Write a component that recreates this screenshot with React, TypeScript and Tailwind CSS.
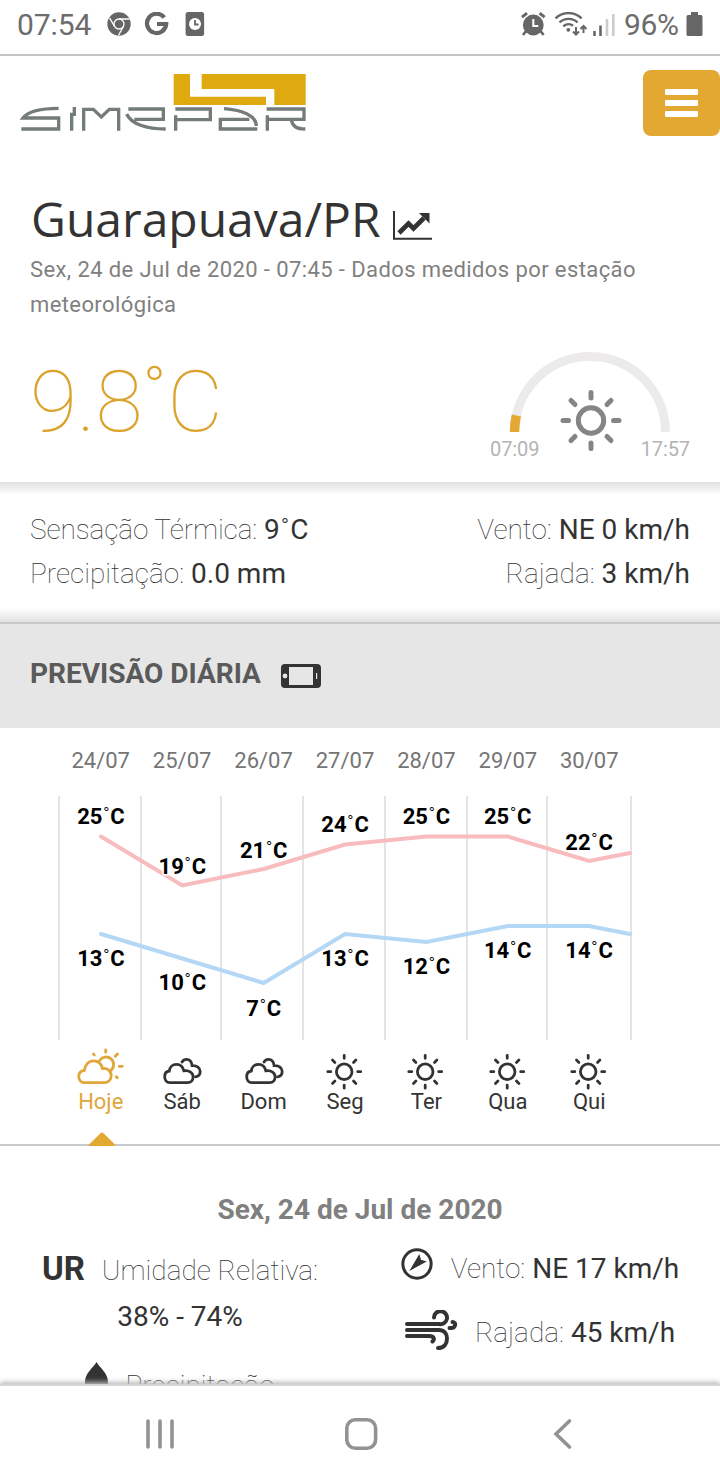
import type { ReactNode } from "react";

type Sky = "partly" | "cloudy" | "sunny";

type Day = {
  date: string;
  name: string;
  sky: Sky;
  max: number;
  min: number;
  maxY: number;
  minY: number;
  maxLabelY: number;
  minLabelY: number;
};

const days: Day[] = [
  { date: "24/07", name: "Hoje", sky: "partly", max: 25, min: 13, maxY: 40.5, minY: 138, maxLabelY: 28, minLabelY: 170 },
  { date: "25/07", name: "Sáb", sky: "cloudy", max: 19, min: 10, maxY: 89.5, minY: 162.5, maxLabelY: 78, minLabelY: 194 },
  { date: "26/07", name: "Dom", sky: "cloudy", max: 21, min: 7, maxY: 73, minY: 187, maxLabelY: 62, minLabelY: 220 },
  { date: "27/07", name: "Seg", sky: "sunny", max: 24, min: 13, maxY: 48.5, minY: 138, maxLabelY: 36, minLabelY: 170 },
  { date: "28/07", name: "Ter", sky: "sunny", max: 25, min: 12, maxY: 40.5, minY: 146, maxLabelY: 28, minLabelY: 178 },
  { date: "29/07", name: "Qua", sky: "sunny", max: 25, min: 14, maxY: 40.5, minY: 130, maxLabelY: 28, minLabelY: 162 },
  { date: "30/07", name: "Qui", sky: "sunny", max: 22, min: 14, maxY: 65, minY: 130, maxLabelY: 54, minLabelY: 162 },
];

const gridLines = [59, 141, 221, 303, 385, 467, 547, 631];
const dayX = (i: number) => 101 + i * 81.35;

function StatusBar() {
  return (
    <div className="flex h-14 items-start border-b-2 border-[#c4c4c4] text-[#6c6c6c]">
      <span className="ml-[17px] mt-[7px] w-[90px] text-[30px] leading-9 tracking-[-0.1px]">07:54</span>
      <svg className="mt-3 h-6 w-[100px]" viewBox="0 0 100 24" fill="none">
        <circle cx="12" cy="12" r="11.7" fill="#666" />
        <circle cx="12" cy="12" r="5" stroke="#fff" strokeWidth="1.3" />
        <path d="M12 7h10.5M7.7 14.6L2.5 5.8M16.3 14.6L11.4 23.5" stroke="#fff" strokeWidth="1.3" />
        <path d="M57.3 5.6A9.6 9.6 0 1 0 59.2 12H50" stroke="#666" strokeWidth="4.2" />
        <rect x="78.6" y="0" width="18.5" height="24" rx="2.5" fill="#666" />
        <circle cx="88" cy="12" r="6" fill="#fff" />
        <path d="M88 8v4.5h3.6" stroke="#666" strokeWidth="1.8" />
      </svg>
      <svg className="ml-auto mt-3 h-6 w-24" viewBox="0 0 96 24" fill="none">
        <circle cx="13.3" cy="13" r="10.4" fill="#666" />
        <path d="M2 5.2L7 1.2M24.6 5.2L19.6 1.2" stroke="#666" strokeWidth="3" />
        <path d="M6 19L3 23M20.6 19L23.6 23" stroke="#666" strokeWidth="2.6" />
        <path d="M13.3 7v7h5" stroke="#fff" strokeWidth="2" />
        <path
          d="M35.6 6.4A18.5 18.5 0 0 1 61.5 6.4M39.5 10.5A13 13 0 0 1 57.6 10.5M43.3 14.3A7.6 7.6 0 0 1 53 13.8"
          stroke="#666"
          strokeWidth="2.4"
        />
        <circle cx="48.3" cy="17.8" r="1.9" fill="#666" />
        <path d="M56 15v7M53 19.5l3 3 3-3M63.5 21v-7M60.5 17l3-3 3 3" stroke="#666" strokeWidth="2" />
        <path d="M74.5 19v5M80.5 13.5v10.5" stroke="#666" strokeWidth="2.6" />
        <path d="M87 7v17M93.3 2v22" stroke="#ccc" strokeWidth="2.6" />
      </svg>
      <span className="ml-[8px] mt-[7px] w-[57px] text-[30px] leading-9 tracking-[-0.4px]">96%</span>
      <svg className="ml-[5px] mr-[17px] mt-3 h-6 w-[17px]" viewBox="0 0 17 24" fill="#666">
        <path d="M5 0h7v3h3a1.5 1.5 0 0 1 1.5 1.5V22.5A1.5 1.5 0 0 1 15 24H2A1.5 1.5 0 0 1 .5 22.5V4.5A1.5 1.5 0 0 1 2 3H5z" />
      </svg>
    </div>
  );
}

function Logo() {
  return (
    <svg className="ml-[19px] h-16 w-[290px]" viewBox="57 210 870 192" fill="none">
      <path d="M521 222H570V290H798V315H521zM605 222H917V315H823V267H605z" fill="#dfa910" />
      <g stroke="#747b7b" strokeWidth="10">
        <path d="M176 325C132 325 86 332 69 354H176V387H64" />
        <path d="M215 392V338M223 348V321" />
        <path d="M251 392V328H280L304 351L328 328H356V392" />
        <path d="M385 327H490V358H403M380 342C393 372 440 387 497 387" />
        <path d="M526 327H631V359H527V392M527 359V346" />
        <path d="M672 326C728 330 769 348 769 378M748 358H661V387H772" />
        <path d="M800 327H912V358H802V392M802 358V346M874 360C878 380 890 387 916 387" />
      </g>
    </svg>
  );
}

function Header() {
  return (
    <header className="flex items-start justify-between pt-[14px]">
      <Logo />
      <button className="flex h-[66px] w-[77px] flex-col items-center justify-center gap-[5px] rounded-lg bg-[#e3a832]">
        <span className="h-[6px] w-[33px] rounded-[1px] bg-white" />
        <span className="h-[6px] w-[33px] rounded-[1px] bg-white" />
        <span className="h-[6px] w-[33px] rounded-[1px] bg-white" />
      </button>
    </header>
  );
}

function SunGauge() {
  return (
    <div className="w-[200px]">
      <svg className="h-[86px] w-full overflow-visible" viewBox="0 0 200 86" fill="none">
        <path d="M24.5 80A75.5 75.5 0 0 1 175.5 80" stroke="#edeaeb" strokeWidth="9" />
        <path d="M24.5 80A75.5 75.5 0 0 1 26.4 63.5" stroke="#e3a832" strokeWidth="9.5" />
        <g stroke="#858585" strokeWidth="5" strokeLinecap="round">
          <circle cx="101" cy="68.5" r="12.7" />
          <path d="M101 40.5v5.5M101 91v5.5M73 68.5h5.5M123.5 68.5h5.5M81 48.5l4 4M117 84.5l4 4M81 88.5l4-4M117 52.5l4-4" />
        </g>
      </svg>
      <div className="mt-[-1px] flex justify-between text-[20px] leading-6 tracking-[-0.1px] text-[#b4b4b4]">
        <span>07:09</span>
        <span>17:57</span>
      </div>
    </div>
  );
}

function Current() {
  return (
    <section className="h-[346px] px-[30px] pt-[50px]">
      <div className="flex h-16 items-center">
        <h1 className="pl-[1px] pt-[1px] font-['Open_Sans'] text-[48px] leading-[64px] text-[#333]">Guarapuava/PR</h1>
        <svg className="ml-[12px] mt-[13px] h-[30px] w-[39px]" viewBox="0 0 39 30" fill="none">
          <path d="M1 1V28.7H39" stroke="#333" strokeWidth="2" />
          <path d="M6 23L15.5 13.5L20.5 18.5L31 8" stroke="#333" strokeWidth="4.6" />
          <path d="M26 3H36.5V13.5z" fill="#333" />
        </svg>
      </div>
      <p className="mr-[-5px] mt-[2px] text-[22px] leading-[35px] tracking-[0.4px] text-[#808080]">
        Sex, 24 de Jul de 2020 - 07:45 - Dados medidos por estação meteorológica
      </p>
      <div className="mt-[30px] flex justify-between">
        <div className="text-[86px] font-thin leading-[100px] text-[#dba22c]">9.8˚C</div>
        <SunGauge />
      </div>
    </section>
  );
}

function Reading({ label, children }: { label: string; children: ReactNode }) {
  return (
    <p className="whitespace-nowrap text-[28px] leading-[44px] text-[#333]">
      <span className="font-thin">{label}</span> {children}
    </p>
  );
}

function Conditions() {
  return (
    <section className="flex h-[140px] justify-between bg-[linear-gradient(#e0e0e0,#fff_13px,#fff_126px,#e2e2e2)] px-[30px] pt-[26px]">
      <div>
        <div className="tracking-[-0.1px]">
          <Reading label="Sensação Térmica:">
            9<span className="mx-[1px] font-light">˚</span>C
          </Reading>
        </div>
        <Reading label="Precipitação:">0.0 mm</Reading>
      </div>
      <div className="text-right">
        <Reading label="Vento:">NE 0 km/h</Reading>
        <Reading label="Rajada:">3 km/h</Reading>
      </div>
    </section>
  );
}

function DailyTitle() {
  return (
    <div className="flex h-[106px] items-center border-t-2 border-[#c9c9c9] bg-[#e6e6e6] pl-[30px]">
      <h2 className="mb-[5px] w-[251px] text-[28px] font-bold leading-8 text-[#5a5a5a]">PREVISÃO DIÁRIA</h2>
      <svg className="h-6 w-10" viewBox="0 0 40 24">
        <rect width="40" height="24" rx="4" fill="#333" />
        <rect x="8" y="3" width="24" height="18" fill="#e6e6e6" />
        <circle cx="4" cy="12" r="2.4" fill="#e6e6e6" />
        <rect x="35" y="9" width="1.2" height="6" fill="#e6e6e6" />
      </svg>
    </div>
  );
}

function TempLabel({ x, y, value }: { x: number; y: number; value: number }) {
  return (
    <text x={x} y={y}>
      {value}
      <tspan className="font-light" dx="0.5">˚</tspan>
      <tspan dx="0.5">C</tspan>
    </text>
  );
}

function TempChart() {
  const maxPoints = days.map((d, i) => `${dayX(i)},${d.maxY}`).join(" ") + " 630,57";
  const minPoints = days.map((d, i) => `${dayX(i)},${d.minY}`).join(" ") + " 630,138";

  return (
    <svg className="block h-[244px] w-full" viewBox="0 0 720 244" fill="none">
      {gridLines.map((x) => (
        <path key={x} d={`M${x} 0V244`} stroke="#e4e4e4" strokeWidth="2" />
      ))}
      <polyline points={maxPoints} stroke="#f8bcbf" strokeWidth="4" strokeLinecap="round" />
      <polyline points={minPoints} stroke="#b4d7f6" strokeWidth="4" strokeLinecap="round" />
      {/* white halo keeps the labels readable over the lines */}
      <g className="text-[22px] font-bold" stroke="#fff" strokeWidth="3" textAnchor="middle">
        {days.map((d, i) => (
          <TempLabel key={d.date} x={dayX(i)} y={d.maxLabelY} value={d.max} />
        ))}
      </g>
      <g className="text-[22px] font-bold" fill="#000" textAnchor="middle">
        {days.map((d, i) => (
          <g key={d.date}>
            <TempLabel x={dayX(i)} y={d.maxLabelY} value={d.max} />
            <TempLabel x={dayX(i)} y={d.minLabelY} value={d.min} />
          </g>
        ))}
      </g>
    </svg>
  );
}

function SkyIcon({ sky }: { sky: Sky }) {
  return (
    <svg
      className="h-11 w-[50px] overflow-visible"
      viewBox="0.5 0 50 44"
      fill="none"
      stroke="currentColor"
      strokeWidth="2.8"
      strokeLinecap="round"
    >
      {sky === "partly" && (
        <>
          <path d="M9 37.6C5.3 37.6 3.3 35 3.3 31.5C3.3 28 5.5 25.8 8.8 25.4C9.5 20 13 15.8 18 15.8C22.5 15.8 26 18.8 27 23.6C32 22.8 35.7 26 35.7 30.5C35.7 34.5 33 37.6 29 37.6Z" />
          <path d="M24.2 15.4A7.6 7.6 0 1 1 35.2 25.6M30.2 4.8v2.4M42 9l-2.2 2.2M43.8 21.3h3M40.8 31.8l1 1M18 9l.8 1" />
        </>
      )}
      {sky === "cloudy" && (
        <>
          <path d="M13.5 37.7C9.8 37.7 8.2 34.8 8.2 31.8C8.2 28.5 10 26.3 12.8 26C13.2 22 16 19.3 20 19.3C24 19.3 26.5 21.8 27.3 25.8C33 25 36.6 28 36.6 31.8C36.6 35.2 34.5 37.7 31 37.7Z" />
          <path d="M25.5 17C26.5 15.2 28 14.3 30 14.3C33.2 14.3 35.2 16.8 35.6 20.6C40.5 20.2 43.7 22.8 43.7 26.5C43.7 29.8 41.5 31.6 39 31.9" />
        </>
      )}
      {sky === "sunny" && (
        <>
          <circle cx="24.7" cy="26.7" r="7.8" />
          <path d="M24.7 10.3v3M24.7 40.2v3M8.3 26.7h3M38.2 26.7h3M13 15l2.4 2.4M34 36l2.4 2.4M13 38.4l2.4-2.4M34 17.4l2.4-2.4" />
        </>
      )}
    </svg>
  );
}

function DailyForecast() {
  return (
    <section>
      <div className="ml-[60px] grid h-[68px] w-[570px] grid-cols-7 pt-[21px] text-center text-[22px] leading-6 text-[#757575]">
        {days.map((d) => (
          <span key={d.date}>{d.date}</span>
        ))}
      </div>
      <TempChart />
      <div className="border-b-2 border-[#c9c9c9]">
        <div className="ml-[60px] grid h-[104px] w-[570px] grid-cols-7 pt-[5px]">
          {days.map((d, i) => (
            <div
              key={d.date}
              className={i === 0 ? "relative flex flex-col items-center text-[#e0a63a]" : "flex flex-col items-center text-[#333]"}
            >
              <SkyIcon sky={d.sky} />
              <span className="mt-[1px] text-[22px] leading-6">{d.name}</span>
              {i === 0 && (
                <svg className="absolute -bottom-0.5 left-[29px] h-[14px] w-[26px]" viewBox="0 0 26 14" fill="#e3a832">
                  <path d="M0 14V12.5L11.5 1.2Q13 -.4 14.5 1.2L26 12.5V14z" />
                </svg>
              )}
            </div>
          ))}
        </div>
      </div>
    </section>
  );
}

function DetailRow({ icon, children }: { icon: ReactNode; children: ReactNode }) {
  return (
    <div className="flex h-11 items-center justify-center">
      {icon}
      {children}
    </div>
  );
}

function Details() {
  return (
    <section className="h-[238px] overflow-hidden pt-[48px]">
      <h3 className="text-center text-[28px] font-bold leading-8 text-[#808080]">Sex, 24 de Jul de 2020</h3>
      <div className="grid grid-cols-2">
        <div className="pt-[21px] text-[28px] leading-[44px] text-[#333]">
          <div className="flex items-baseline justify-center">
            <span className="mr-[17px] text-[33px] font-bold leading-[44px]">UR</span>
            <span className="font-thin">Umidade Relativa:</span>
          </div>
          <div className="mt-[2px] text-center">38% - 74%</div>
          <div className="mt-[25px]">
            <DetailRow
              icon={
                <svg className="mb-[12px] mr-[17px] h-9 w-[23px]" viewBox="0 0 23 36" fill="#333">
                  <path d="M11.5 0C15 6 23 11 23 20A11.5 11.5 0 0 1 0 20C0 11 8 6 11.5 0z" />
                </svg>
              }
            >
              <span className="font-thin">Precipitação</span>
            </DetailRow>
          </div>
        </div>
        <div className="pt-[21px]">
          <DetailRow
            icon={
              <svg className="mb-[10px] mr-[18px] h-8 w-8" viewBox="0 0 32 32" fill="none">
                <circle cx="16" cy="16" r="14.2" stroke="#333" strokeWidth="3" />
                <path d="M8.3 23L18.3 6L20 11.8L25.7 13.5z" fill="#333" />
              </svg>
            }
          >
            <Reading label="Vento:">NE 17 km/h</Reading>
          </DetailRow>
          <div className="mt-5">
            <DetailRow
              icon={
                <svg
                  className="mb-[6px] mr-[17px] h-10 w-[53px]"
                  viewBox="0 0 53 40"
                  fill="none"
                  stroke="#333"
                  strokeWidth="4"
                  strokeLinecap="round"
                >
                  <path d="M2 14H34A6.5 6.5 0 1 0 29 7.5M2 20H34C39 20 42 23.5 42 28.5C42 34 39 38 33 38M2 26H24C29 26 30 29 27.5 31.5M44.500 18H46C51 18 51.5 12 47.500 12" />
                </svg>
              }
            >
              <Reading label="Rajada:">45 km/h</Reading>
            </DetailRow>
          </div>
        </div>
      </div>
    </section>
  );
}

function NavBar() {
  return (
    <nav className="relative h-24 border-t-2 border-[#d6d6d6] bg-white shadow-[0_-2px_5px_#bbb]">
      <svg className="mt-8 block h-8 w-full" viewBox="0 0 720 32" fill="none" stroke="#929292" strokeWidth="3.6">
        <path d="M148 3V29M160 3V29M172 3V29" strokeLinecap="round" />
        <rect x="346.8" y="1.8" width="28.8" height="28.4" rx="8.5" />
        <path d="M569.5 3L556 16L569.5 29" strokeLinecap="round" />
      </svg>
    </nav>
  );
}

export default function App() {
  return (
    <div className="flex h-[1480px] w-[720px] flex-col overflow-hidden bg-white font-['Roboto',sans-serif]">
      <StatusBar />
      <Header />
      <Current />
      <Conditions />
      <DailyTitle />
      <DailyForecast />
      <Details />
      <NavBar />
    </div>
  );
}
